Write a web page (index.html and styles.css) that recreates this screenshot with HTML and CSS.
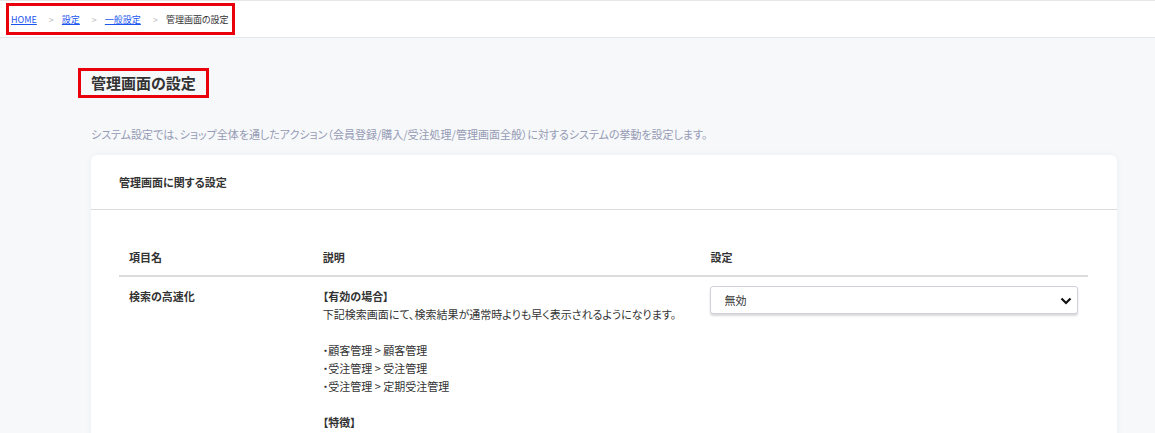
FILE: index.html
```html
<!DOCTYPE html>
<html lang="ja">
<head>
    <meta charset="UTF-8">
    <meta name="viewport" content="width=device-width, initial-scale=1.0">
    <title>管理画面の設定</title>
    <link rel="stylesheet" href="styles.css">
</head>
<body>
    <header class="topbar">
        <ol class="breadcrumb marked">
            <li><a href="#">HOME</a></li>
            <li class="sep">&gt;</li>
            <li><a href="#">設定</a></li>
            <li class="sep">&gt;</li>
            <li><a href="#">一般設定</a></li>
            <li class="sep">&gt;</li>
            <li class="current">管理画面の設定</li>
        </ol>
    </header>

    <main class="page">
        <h1 class="page-title marked">管理画面の設定</h1>
        <p class="lead">システム設定では、ショップ全体を通したアクション（会員登録/購入/受注処理/管理画面全般）に対するシステムの挙動を設定します。</p>

        <section class="card">
            <div class="card-header">管理画面に関する設定</div>
            <div class="card-body">
                <table class="settings">
                    <thead>
                        <tr>
                            <th class="col-name">項目名</th>
                            <th class="col-desc">説明</th>
                            <th class="col-value">設定</th>
                        </tr>
                    </thead>
                    <tbody>
                        <tr>
                            <td class="item-name">検索の高速化</td>
                            <td>
                                <strong>【有効の場合】</strong><br>
                                下記検索画面にて、検索結果が通常時よりも早く表示されるようになります。<br>
                                <br>
                                ・顧客管理 &gt; 顧客管理<br>
                                ・受注管理 &gt; 受注管理<br>
                                ・受注管理 &gt; 定期受注管理<br>
                                <br>
                                <strong>【特徴】</strong>
                            </td>
                            <td>
                                <div class="select-wrap">
                                    <select class="form-select">
                                        <option>無効</option>
                                        <option>有効</option>
                                    </select>
                                    <svg class="chevron" width="12" height="8" viewBox="0 0 12 8"><path d="M1.5 1.5 L6 6 L10.5 1.5" fill="none" stroke="#111" stroke-width="2.2"/></svg>
                                </div>
                            </td>
                        </tr>
                    </tbody>
                </table>
            </div>
        </section>
    </main>
</body>
</html>
```

FILE: styles.css
```css
html, body {
    margin: 0;
    padding: 0;
}
body {
    font-family: "Noto Sans CJK JP", "Noto Sans", sans-serif;
    font-size: 11px;
    font-feature-settings: "palt";
    color: #333;
    background-color: #f7f8fa;
    overflow: hidden;
}
.marked {
    outline: 3px solid #e8000b;
}
.topbar {
    background-color: #fff;
    border-top: 1px solid #e6e6e6;
    border-bottom: 1px solid #e2e5ea;
    padding: 5px 9px;
}
.breadcrumb {
    display: inline-flex;
    align-items: center;
    list-style: none;
    margin: 0;
    padding: 0 3px 0 2px;
    height: 26px;
    font-size: 9px;
}
.breadcrumb a {
    color: #1a56f0;
    text-decoration: underline;
}
.breadcrumb .sep {
    color: #b5b8bd;
    margin: 0 8px 0 12px;
}
.breadcrumb .current {
    color: #333;
}
.page {
    padding: 33px 38px 0 91px;
}
.page-title {
    display: inline-block;
    margin: 0 0 0 -10px;
    padding: 0 10px;
    font-size: 15px;
    line-height: 24px;
    font-weight: bold;
    color: #333;
}
.lead {
    margin: 30px 0 12px;
    color: #959bb5;
    font-size: 11px;
    line-height: 18px;
}
.card {
    background-color: #fff;
    border-radius: 6px;
    box-shadow: 0 0 6px rgba(0,0,0,0.05);
}
.card-header {
    padding: 19px 28px;
    line-height: 16px;
    font-weight: bold;
    border-bottom: 1px solid #dcdcdc;
}
.card-body {
    padding: 26px 29px 20px 28px;
}
.settings {
    width: 100%;
    border-collapse: collapse;
    line-height: 18px;
}
.settings th {
    text-align: left;
    font-weight: bold;
    padding: 12px 10px 9px;
    border-bottom: 2px solid #dcdcdc;
}
.settings .col-name {
    width: 20%;
}
.settings .col-desc {
    width: 40%;
}
.settings td {
    vertical-align: top;
    padding: 10px 10px;
}
.settings .item-name {
    font-weight: bold;
}
.select-wrap {
    position: relative;
}
.form-select {
    -webkit-appearance: none;
    appearance: none;
    width: 100%;
    height: 28px;
    margin-top: -1px;
    padding: 0 30px 0 13px;
    font-family: inherit;
    font-size: 11px;
    color: #333;
    background-color: #fff;
    border: 1px solid #cfd2d8;
    border-radius: 3px;
    box-shadow: 0 2px 2px rgba(0,0,0,0.15);
}
.chevron {
    position: absolute;
    right: 6px;
    top: 10px;
}
```
